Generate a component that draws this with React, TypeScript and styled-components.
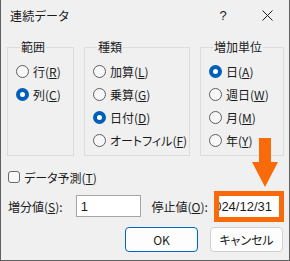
import React from "react";
import styled, { createGlobalStyle } from "styled-components";

const GlobalStyle = createGlobalStyle`
  html, body {
    margin: 0;
    padding: 0;
    background: #f0f0f0;
  }
  body {
    font-family: "Noto Sans CJK JP", "Noto Sans", sans-serif;
    font-size: 12px;
    color: #1b1b1b;
    font-feature-settings: "palt";
  }
`;

const Dialog = styled.div`
  position: relative;
  box-sizing: border-box;
  width: 290px;
  height: 261px;
  background: #f0f0f0;
  border: 1px solid #5f5f5f;
  border-top: none;
  display: flex;
  flex-direction: column;
`;

const TitleBar = styled.div`
  height: 30px;
  display: flex;
  align-items: center;
  padding-left: 9px;
`;

const Title = styled.div`
  flex: 1;
  font-size: 12px;
  letter-spacing: 0.3px;
`;

const TitleButton = styled.div`
  width: 44px;
  height: 30px;
  display: flex;
  align-items: center;
  justify-content: center;
  font-size: 13px;
  font-family: "Liberation Sans", sans-serif;
`;

const Body = styled.div`
  padding: 10px 5px 0 6px;
  display: flex;
  flex-direction: column;
`;

const Groups = styled.div`
  display: flex;
  gap: 10px;
  height: 116px;
`;

const Group = styled.fieldset<{ $w: number }>`
  box-sizing: border-box;
  width: ${(p) => p.$w}px;
  margin: 0;
  padding: 6px 0 0 8px;
  border: 1px solid #dcdcdc;
  min-inline-size: 0;
`;

const Legend = styled.legend`
  padding: 0 1px;
  margin-left: 4px;
  line-height: 14px;
  font-size: 12px;
`;

const Row = styled.label`
  display: flex;
  align-items: center;
  height: 23px;
  white-space: nowrap;
`;

const Radio = styled.span<{ $on?: boolean }>`
  box-sizing: border-box;
  width: 13px;
  height: 13px;
  border-radius: 50%;
  margin-right: 4px;
  flex: none;
  background: ${(p) => (p.$on ? "#ffffff" : "#f7f7f7")};
  border: ${(p) => (p.$on ? "4px solid #005fb8" : "1px solid #5e5e5e")};
`;

const Key = styled.span`
  text-decoration: underline;
  text-underline-offset: 1px;
`;

const CheckRow = styled.label`
  display: flex;
  align-items: center;
  height: 18px;
  margin-top: 12px;
  margin-left: 1px;
`;

const Check = styled.span`
  box-sizing: border-box;
  width: 12px;
  height: 12px;
  border: 1px solid #6a6a6a;
  border-radius: 3px;
  background: #f8f8f8;
  margin-right: 4px;
`;

const ValueRow = styled.div`
  display: flex;
  align-items: center;
  height: 22px;
  margin-top: 9px;
`;

const FieldLabel = styled.span<{ $w: number; $ml?: number }>`
  width: ${(p) => p.$w}px;
  margin-left: ${(p) => p.$ml ?? 0}px;
  padding-left: 1px;
  box-sizing: border-box;
  white-space: nowrap;
`;

const TextBox = styled.div`
  box-sizing: border-box;
  width: 66px;
  height: 22px;
  border: 1px solid #a5a5a5;
  background: #ffffff;
  padding-left: 4px;
  display: flex;
  align-items: center;
  font-family: "Liberation Sans", sans-serif;
  font-size: 13px;
`;

const Highlight = styled.div`
  box-sizing: border-box;
  width: 70px;
  height: 31px;
  border: 5px solid #f96a0a;
  background: #ffffff;
  display: flex;
  align-items: center;
  justify-content: flex-end;
  overflow: hidden;
  padding-right: 6px;
  font-family: "Liberation Sans", sans-serif;
  font-size: 13px;
  white-space: nowrap;
`;

const Caret = styled.span`
  display: inline-block;
  width: 1px;
  height: 17px;
  background: #000;
  margin-left: 1px;
`;

const Buttons = styled.div`
  display: flex;
  justify-content: flex-end;
  gap: 12px;
  margin-top: 10px;
  padding-right: 1px;
`;

const Button = styled.button<{ $primary?: boolean }>`
  box-sizing: border-box;
  width: 73px;
  height: 25px;
  border-radius: 4px;
  background: #fdfdfd;
  border: 1px solid ${(p) => (p.$primary ? "#0067c0" : "#d0d0d0")};
  font-family: "Noto Sans CJK JP", "Noto Sans", sans-serif;
  font-feature-settings: "palt";
  font-size: 12px;
  color: #1b1b1b;
  padding: 0;
`;

const Arrow = styled.svg`
  position: absolute;
  left: 251px;
  top: 138px;
`;

const R = ({ on, text, k }: { on?: boolean; text: string; k: string }) => (
  <Row>
    <Radio $on={on} />
    {text}(<Key>{k}</Key>)
  </Row>
);

export default function App() {
  return (
    <>
      <GlobalStyle />
      <Dialog>
        <TitleBar>
          <Title>連続データ</Title>
          <TitleButton>?</TitleButton>
          <TitleButton>
            <svg width="11" height="11" viewBox="0 0 11 11">
              <path d="M0.5 0.5L10.5 10.5M10.5 0.5L0.5 10.5" stroke="#1b1b1b" strokeWidth="1" />
            </svg>
          </TitleButton>
        </TitleBar>
        <Body>
          <Groups>
            <Group $w={67}>
              <Legend>範囲</Legend>
              <R text="行" k="R" />
              <R on text="列" k="C" />
            </Group>
            <Group $w={106}>
              <Legend>種類</Legend>
              <R text="加算" k="L" />
              <R text="乗算" k="G" />
              <R on text="日付" k="D" />
              <R text="オートフィル" k="F" />
            </Group>
            <Group $w={84}>
              <Legend>増加単位</Legend>
              <R on text="日" k="A" />
              <R text="週日" k="W" />
              <R text="月" k="M" />
              <R text="年" k="Y" />
            </Group>
          </Groups>
          <CheckRow>
            <Check />
            データ予測(<Key>T</Key>)
          </CheckRow>
          <ValueRow>
            <FieldLabel $w={69}>
              増分値(<Key>S</Key>):
            </FieldLabel>
            <TextBox>1</TextBox>
            <FieldLabel $w={64} $ml={9}>
              停止値(<Key>O</Key>):
            </FieldLabel>
            <Highlight>
              2024/12/31
              <Caret />
            </Highlight>
          </ValueRow>
          <Buttons>
            <Button $primary>OK</Button>
            <Button>キャンセル</Button>
          </Buttons>
        </Body>
        <Arrow width="26" height="50" viewBox="0 0 26 50">
          <polygon points="7,0 19,0 19,24 26,24 13,49 0,24 7,24" fill="#f96a0a" />
        </Arrow>
      </Dialog>
    </>
  );
}
